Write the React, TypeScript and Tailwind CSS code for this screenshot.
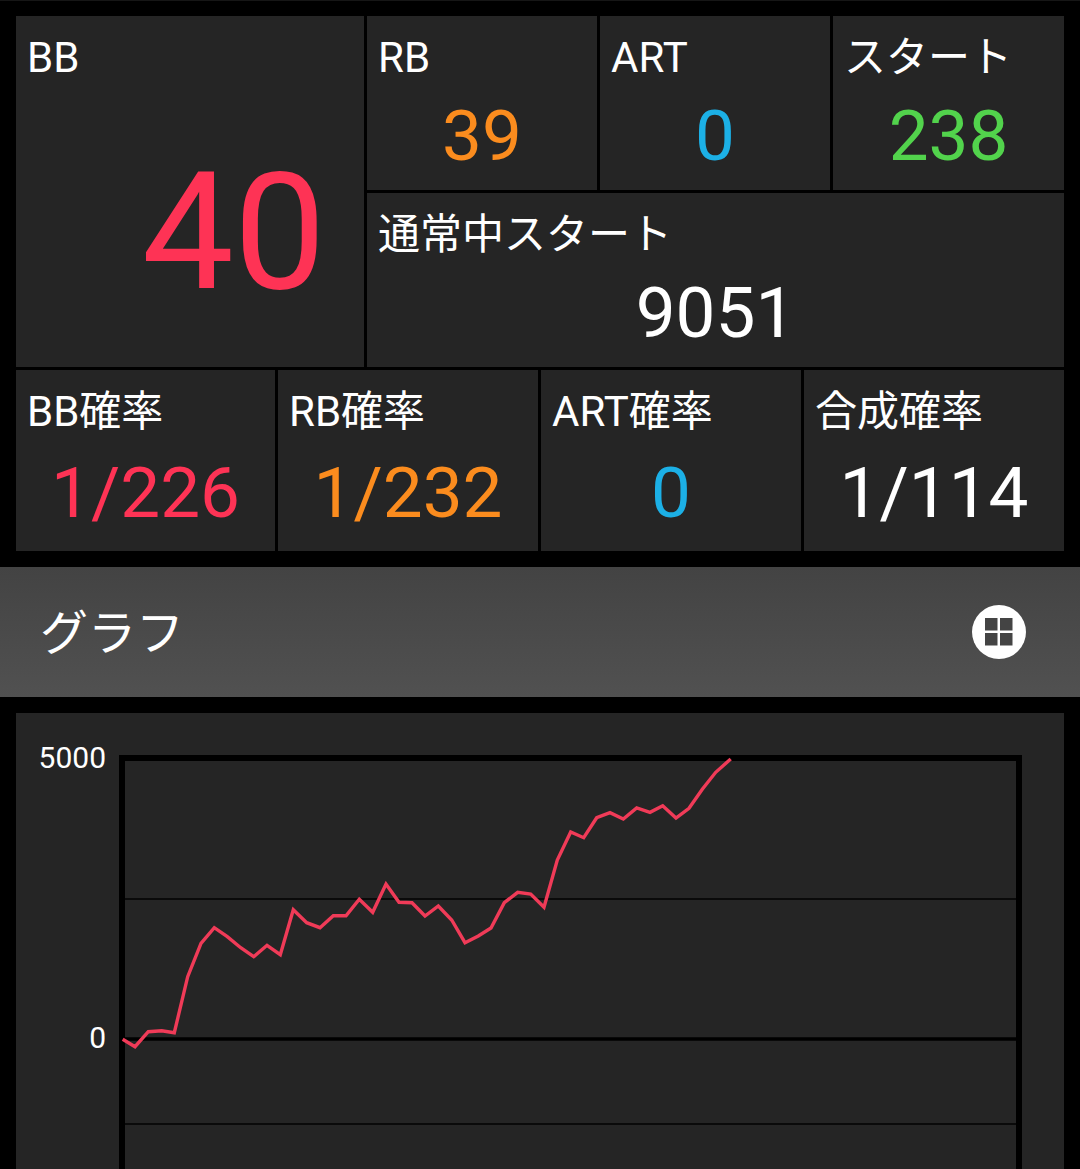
const font = { fontFamily: '"Roboto", "Noto Sans CJK JP", sans-serif' };

const pts =
  "122.7,1039.3 135,1046.7 148.3,1031.7 161.7,1030.7 174.3,1032.7 187.7,976.7 201,943.3 214.3,927.7 227.3,936.7 240.7,947.7 253.7,956.7 267,945.3 280.3,954.7 293.3,909.7 306.7,922.7 320,927.7 333.3,915.7 346,915.7 359.3,899.3 372.7,912.3 386,884 399,902.3 412,902.7 425,916 438.3,906 451.7,920 465,942.7 478.3,936 491,928 504.3,902.7 517.7,892.3 530.7,894 544,907.3 557.3,860 570.7,832 583.7,837.7 596.7,817.7 610,812.7 623.3,819 636.7,808 650,812.3 662.7,805.7 676,818 689,808.3 702.3,789.3 715.7,772.3 730.7,759";

function Label({ children }: { children: React.ReactNode }) {
  return <div className="pl-[11px] pt-[14px] text-[42px] leading-[56px] text-white whitespace-nowrap">{children}</div>;
}

function Cell({ label, value, color, className = "", low = false }: { label: string; value: string; color: string; className?: string; low?: boolean }) {
  return (
    <div className={`bg-[#252525] ${className}`}>
      <Label>{label}</Label>
      <div className={`${low ? "mt-[11px]" : "mt-[8px]"} text-center text-[71px] leading-[84px] whitespace-nowrap ${color}`}>{value}</div>
    </div>
  );
}

export default function App() {
  return (
    <div className="w-[1080px] h-[1169px] overflow-hidden bg-black flex flex-col" style={font}>
      <div className="px-4 pt-[15px] border-t border-[#161616]">
        <div className="grid grid-cols-[348px_230px_230px_231px] grid-rows-[174px_174px] gap-[3px]">
          <div className="row-span-2 bg-[#252525]">
            <Label>BB</Label>
            <div className="mt-[62px] pr-[38px] text-right text-[164px] leading-[168px] text-[#fe3355]">40</div>
          </div>
          <Cell label="RB" value="39" color="text-[#fb8c1e]" />
          <Cell label="ART" value="0" color="text-[#1cb0e6]" />
          <Cell label="スタート" value="238" color="text-[#52d34c]" />
          <Cell label="通常中スタート" value="9051" color="text-white" className="col-span-3" />
        </div>
        <div className="mt-[3px] grid grid-cols-[259px_260px_260px_260px] gap-[3px] h-[181px]">
          <Cell low label="BB確率" value="1/226" color="text-[#fe3355]" />
          <Cell low label="RB確率" value="1/232" color="text-[#fb8c1e]" />
          <Cell low label="ART確率" value="0" color="text-[#1cb0e6]" />
          <Cell low label="合成確率" value="1/114" color="text-white" />
        </div>
      </div>

      <div className="mt-4 h-[130px] shrink-0 flex items-center justify-between pl-10 pr-[54px] bg-gradient-to-b from-[#434343] to-[#515151]">
        <span className="pt-1 text-[48px] leading-none text-white">グラフ</span>
        <svg width="54" height="54" viewBox="0 0 54 54" aria-hidden="true">
          <circle cx="27" cy="27" r="27" fill="#fff" />
          <rect x="13" y="13" width="12.5" height="12.5" fill="#444" />
          <rect x="28" y="13" width="12.5" height="12.5" fill="#444" />
          <rect x="13" y="28" width="12.5" height="12.5" fill="#444" />
          <rect x="28" y="28" width="12.5" height="12.5" fill="#444" />
        </svg>
      </div>

      <div className="mt-4 mx-4 flex-1 relative overflow-hidden bg-[#252525]">
        <span className="absolute right-[958px] top-[27px] text-[30px] leading-[36px] text-white">5000</span>
        <span className="absolute right-[958px] top-[307px] text-[30px] leading-[36px] text-white">0</span>
        <div className="ml-[103px] mt-[42px] w-[903px] h-[520px] border-[6px] border-black">
          <svg className="block overflow-visible" width="891" height="508" viewBox="125 761 891 508" aria-hidden="true">
            <line x1="125" x2="1016" y1="899" y2="899" stroke="#0a0a0a" strokeWidth="2" />
            <line x1="125" x2="1016" y1="1039" y2="1039" stroke="#000" strokeWidth="3.5" />
            <line x1="125" x2="1016" y1="1124" y2="1124" stroke="#0a0a0a" strokeWidth="2" />
            <polyline points={pts} fill="none" stroke="#f03b58" strokeWidth="3.4" strokeLinejoin="miter" />
          </svg>
        </div>
      </div>
    </div>
  );
}
